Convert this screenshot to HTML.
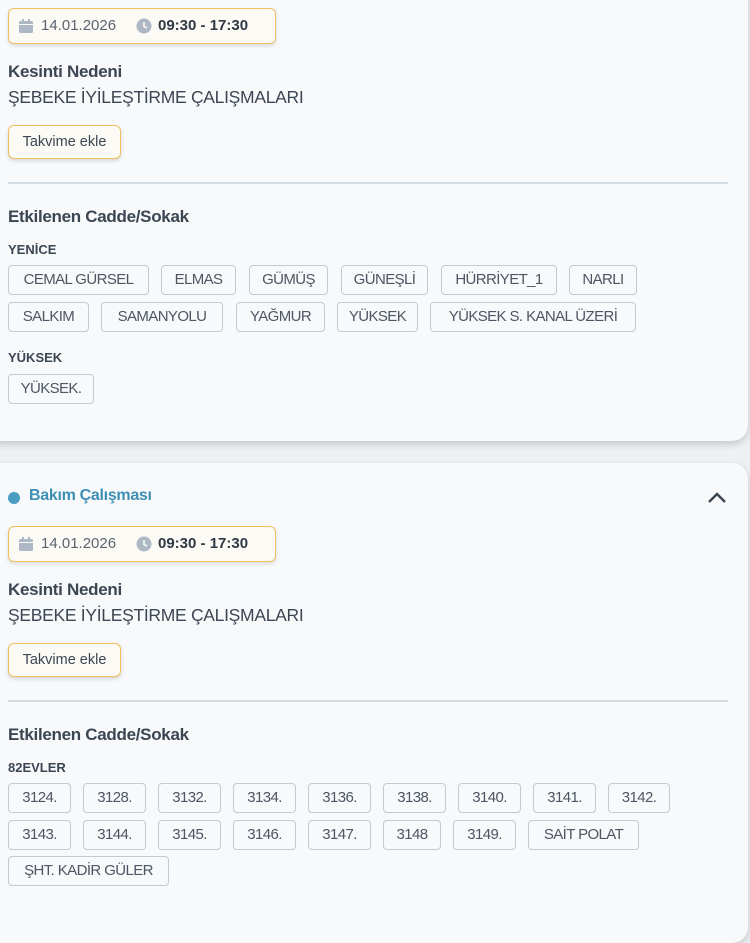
<!DOCTYPE html>
<html><head><meta charset="utf-8"><style>
body{margin:0;width:750px;height:910px;background:#eef1f4;font-family:"Liberation Sans",sans-serif;position:relative;overflow:hidden;color:#3c4653}
.card{position:absolute;left:-20px;width:768px;background:#f7f9fb;border-radius:16px;box-shadow:0 3px 8px rgba(0,0,0,.18)}
.a{position:absolute}
.chip{position:absolute;height:28px;border:1px solid #c3cad3;border-radius:4px;background:#f7f9fb;font-size:15px;line-height:28px;text-align:center;color:#4d5662;letter-spacing:-.6px;white-space:nowrap;overflow:hidden}
.pill{position:absolute;left:8px;width:266px;height:34px;border:1px solid #f0c060;border-radius:6px;background:#fbfaf5;box-shadow:0 2px 4px rgba(0,0,0,.12);font-size:15px;line-height:34px}
.btn{position:absolute;left:8px;width:111px;height:32px;border:1px solid #f0c060;border-radius:6px;background:#fbfaf5;box-shadow:0 2px 4px rgba(0,0,0,.14);font-size:14.5px;line-height:32px;text-align:center;color:#3c4653}
.h{position:absolute;left:8px;font-size:17px;font-weight:bold;color:#3c4653;letter-spacing:-.3px}
.t{position:absolute;left:8px;font-size:17.5px;color:#3c4653;letter-spacing:-.3px}
.sm{position:absolute;left:8px;font-size:13px;font-weight:bold;color:#3c4653}
.div{position:absolute;left:8px;width:720px;height:2px;background:#d2dbe3}
</style></head><body>
<div class="card" style="top:-20px;height:461px"></div>
<div class="card" style="top:463px;height:480px"></div>

<!-- card 1 -->
<div class="pill" style="top:8px"><svg class="a" style="left:10px;top:10px" width="14" height="14" viewBox="0 0 14 14"><rect x="0" y="2" width="14" height="12" rx="1.5" fill="#aeb8c4"/><rect x="3" y="0" width="2" height="3" fill="#aeb8c4"/><rect x="9" y="0" width="2" height="3" fill="#aeb8c4"/><rect x="0" y="5" width="14" height="1" fill="#fbfaf5"/></svg><span class="a" style="left:32px;color:#5a6470">14.01.2026</span><svg class="a" style="left:127px;top:9px" width="16" height="16" viewBox="0 0 16 16"><circle cx="8" cy="8" r="7.5" fill="#aeb8c4"/><path d="M8 4v4.5l3 1.5" stroke="#fbfaf5" stroke-width="1.6" fill="none"/></svg><b class="a" style="left:149px;color:#2f3944">09:30 - 17:30</b></div>
<div class="h" style="top:62px">Kesinti Nedeni</div>
<div class="t" style="top:87px">ŞEBEKE İYİLEŞTİRME ÇALIŞMALARI</div>
<div class="btn" style="top:125px">Takvime ekle</div>
<div class="div" style="top:182px"></div>
<div class="h" style="top:207px">Etkilenen Cadde/Sokak</div>
<div class="sm" style="top:242px">YENİCE</div>
<div class="chip" style="left:8px;top:265px;width:139px">CEMAL GÜRSEL</div>
<div class="chip" style="left:161px;top:265px;width:73px">ELMAS</div>
<div class="chip" style="left:249px;top:265px;width:77px">GÜMÜŞ</div>
<div class="chip" style="left:341px;top:265px;width:85px">GÜNEŞLİ</div>
<div class="chip" style="left:441px;top:265px;width:114px">HÜRRİYET_1</div>
<div class="chip" style="left:569px;top:265px;width:66px">NARLI</div>
<div class="chip" style="left:8px;top:302px;width:79px">SALKIM</div>
<div class="chip" style="left:101px;top:302px;width:120px">SAMANYOLU</div>
<div class="chip" style="left:236px;top:302px;width:87px">YAĞMUR</div>
<div class="chip" style="left:337px;top:302px;width:79px">YÜKSEK</div>
<div class="chip" style="left:430px;top:302px;width:204px">YÜKSEK S. KANAL ÜZERİ</div>
<div class="sm" style="top:350px">YÜKSEK</div>
<div class="chip" style="left:8px;top:374px;width:84px">YÜKSEK.</div>

<!-- card 2 -->
<div class="a" style="left:8px;top:492px;width:12px;height:12px;border-radius:50%;background:#4a9ec0"></div>
<div class="a" style="left:29px;top:487px;font-size:16px;font-weight:bold;color:#3f8fb4;letter-spacing:-.3px">Bakım Çalışması</div>
<svg class="a" style="left:707px;top:491px" width="20" height="14" viewBox="0 0 20 14"><path d="M2 11L10 3L18 11" stroke="#3c4653" stroke-width="2.4" fill="none"/></svg>
<div class="pill" style="top:526px"><svg class="a" style="left:10px;top:10px" width="14" height="14" viewBox="0 0 14 14"><rect x="0" y="2" width="14" height="12" rx="1.5" fill="#aeb8c4"/><rect x="3" y="0" width="2" height="3" fill="#aeb8c4"/><rect x="9" y="0" width="2" height="3" fill="#aeb8c4"/><rect x="0" y="5" width="14" height="1" fill="#fbfaf5"/></svg><span class="a" style="left:32px;color:#5a6470">14.01.2026</span><svg class="a" style="left:127px;top:9px" width="16" height="16" viewBox="0 0 16 16"><circle cx="8" cy="8" r="7.5" fill="#aeb8c4"/><path d="M8 4v4.5l3 1.5" stroke="#fbfaf5" stroke-width="1.6" fill="none"/></svg><b class="a" style="left:149px;color:#2f3944">09:30 - 17:30</b></div>
<div class="h" style="top:580px">Kesinti Nedeni</div>
<div class="t" style="top:605px">ŞEBEKE İYİLEŞTİRME ÇALIŞMALARI</div>
<div class="btn" style="top:643px">Takvime ekle</div>
<div class="div" style="top:700px"></div>
<div class="h" style="top:725px">Etkilenen Cadde/Sokak</div>
<div class="sm" style="top:760px">82EVLER</div>
<div class="chip" style="left:8px;top:783px;width:61px">3124.</div>
<div class="chip" style="left:83px;top:783px;width:61px">3128.</div>
<div class="chip" style="left:158px;top:783px;width:61px">3132.</div>
<div class="chip" style="left:233px;top:783px;width:61px">3134.</div>
<div class="chip" style="left:308px;top:783px;width:61px">3136.</div>
<div class="chip" style="left:383px;top:783px;width:61px">3138.</div>
<div class="chip" style="left:458px;top:783px;width:61px">3140.</div>
<div class="chip" style="left:533px;top:783px;width:61px">3141.</div>
<div class="chip" style="left:608px;top:783px;width:60px">3142.</div>
<div class="chip" style="left:8px;top:820px;width:61px">3143.</div>
<div class="chip" style="left:83px;top:820px;width:61px">3144.</div>
<div class="chip" style="left:158px;top:820px;width:61px">3145.</div>
<div class="chip" style="left:233px;top:820px;width:61px">3146.</div>
<div class="chip" style="left:308px;top:820px;width:61px">3147.</div>
<div class="chip" style="left:383px;top:820px;width:56px">3148</div>
<div class="chip" style="left:453px;top:820px;width:61px">3149.</div>
<div class="chip" style="left:528px;top:820px;width:109px">SAİT POLAT</div>
<div class="chip" style="left:8px;top:856px;width:159px">ŞHT. KADİR GÜLER</div>
</body></html>
